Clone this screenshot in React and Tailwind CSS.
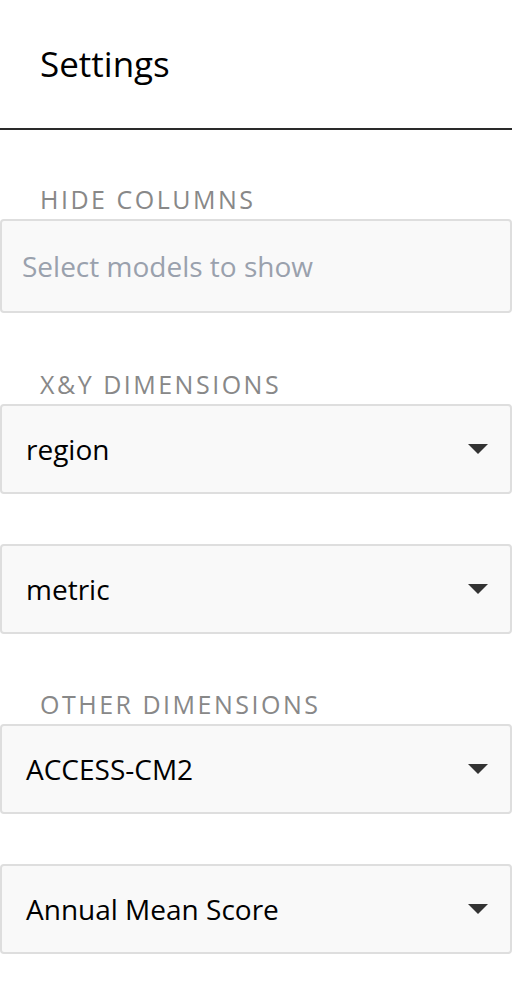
const Arrow = () => (
  <svg width="20" height="10" viewBox="0 0 20 10" className="shrink-0">
    <path d="M0 0h20L10 10z" fill="#333" />
  </svg>
);

const Select = ({ value }) => (
  <div className="flex h-[90px] items-center justify-between rounded border-2 border-[#dedede] bg-[#f9f9f9] pl-[24px] pr-[22px]">
    <span className="text-[28px] text-black">{value}</span>
    <Arrow />
  </div>
);

const Label = ({ children }) => (
  <div className="px-[40px] text-[25px] leading-none tracking-[0.1em] text-[#888]">
    {children}
  </div>
);

export default function App() {
  return (
    <div className="min-h-[998px] w-[512px] bg-white font-['Open_Sans',sans-serif]">
      <div className="flex h-[130px] items-center border-b-2 border-[#2a2a2a] px-[40px]">
        <h1 className="text-[35px] text-black">Settings</h1>
      </div>

      <div className="mt-[57px]">
        <Label>HIDE COLUMNS</Label>
        <div className="mt-[7px] flex h-[94px] items-center rounded border-2 border-[#dedede] bg-[#f9f9f9] px-[20px]">
          <span className="text-[28px] text-[#9aa1ad]">Select models to show</span>
        </div>
      </div>

      <div className="mt-[59px]">
        <Label>X&amp;Y DIMENSIONS</Label>
        <div className="mt-[7px] flex flex-col gap-[50px]">
          <Select value="region" />
          <Select value="metric" />
        </div>
      </div>

      <div className="mt-[58px]">
        <Label>OTHER DIMENSIONS</Label>
        <div className="mt-[7px] flex flex-col gap-[50px]">
          <Select value="ACCESS-CM2" />
          <Select value="Annual Mean Score" />
        </div>
      </div>
    </div>
  );
}
